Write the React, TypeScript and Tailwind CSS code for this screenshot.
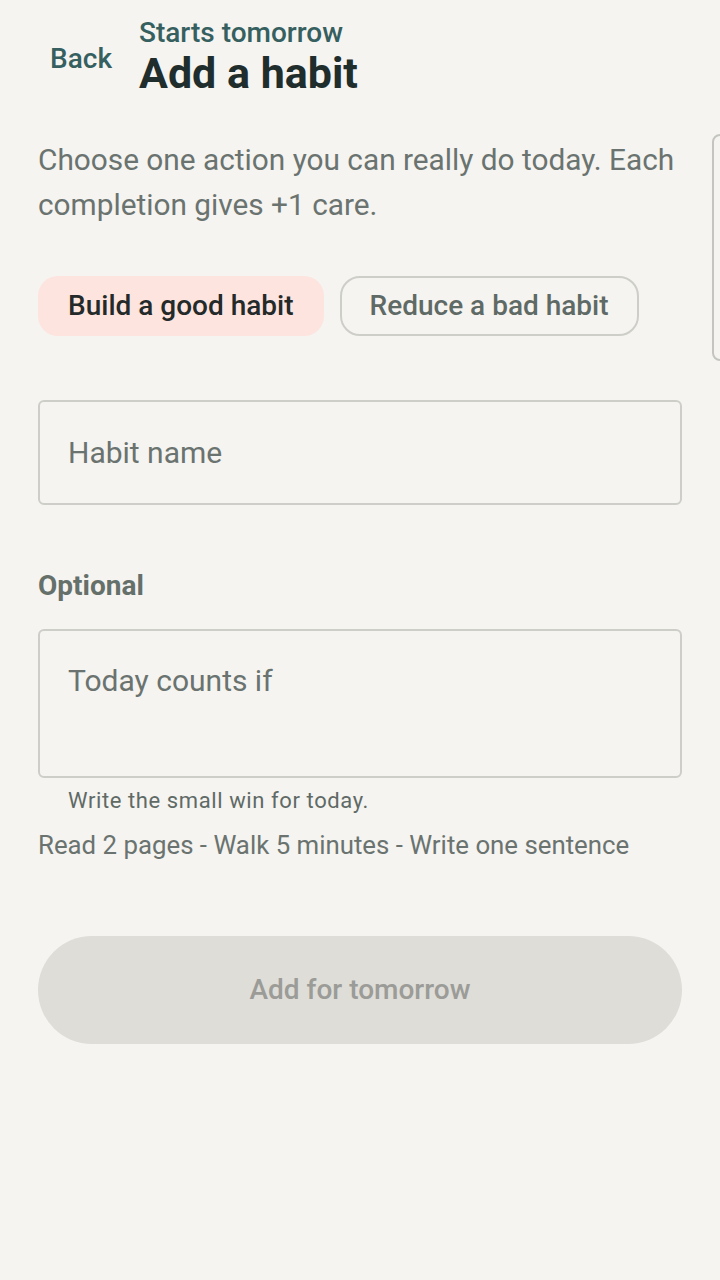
import React from "react";

export default function App() {
  return (
    <div
      className="relative min-h-[1280px] w-[720px] overflow-hidden bg-[#f5f4f0]"
      style={{ fontFamily: "Roboto, 'Noto Sans', sans-serif" }}
    >
      <div className="absolute left-[712px] top-[134px] h-[227px] w-[40px] rounded-[8px] border-2 border-[#c4c5bf]" />
      <div className="px-[38px]">
        <header className="flex items-center pt-[17px]">
          <button className="ml-[12px] pt-[4px] text-[28px] font-medium leading-[32px] text-[#35605f]">
            Back
          </button>
          <div className="ml-[27px] flex flex-col">
            <span className="text-[28px] font-medium leading-[32px] text-[#35605f]">
              Starts tomorrow
            </span>
            <h1 className="text-[43px] font-bold leading-[48px] text-[#1f2d2c]">
              Add a habit
            </h1>
          </div>
        </header>

        <p className="mt-[40px] text-[29.8px] leading-[45px] text-[#6a736f]">
          Choose one action you can really do today. Each completion gives +1
          care.
        </p>

        <div className="mt-[49px] flex gap-[16px]">
          <button className="h-[60px] rounded-[20px] bg-[#fde4de] px-[30px] text-[28px] font-medium text-[#242a29]">
            Build a good habit
          </button>
          <button className="h-[60px] rounded-[20px] border-2 border-[#cdcec8] px-[28px] text-[28px] font-medium text-[#5f6a66]">
            Reduce a bad habit
          </button>
        </div>

        <div className="mt-[64px] flex h-[105px] items-center rounded-[6px] border-2 border-[#cdcec8] px-[28px]">
          <span className="text-[30px] text-[#6a736f]">Habit name</span>
        </div>

        <div className="mt-[66px] text-[28px] font-bold leading-[30px] text-[#66706b]">
          Optional
        </div>

        <div className="mt-[28px] h-[149px] rounded-[6px] border-2 border-[#cdcec8] px-[28px] pt-[32px]">
          <span className="text-[30px] leading-[36px] text-[#6a736f]">
            Today counts if
          </span>
        </div>

        <div className="mt-[10px] pl-[30px] text-[22px] leading-[26px] tracking-[0.6px] text-[#5f6a66]">
          Write the small win for today.
        </div>
        <div className="mt-[16px] text-[25.8px] leading-[30px] text-[#6a736f]">
          Read 2 pages - Walk 5 minutes - Write one sentence
        </div>

        <button className="mt-[76px] flex h-[108px] w-full items-center justify-center rounded-full bg-[#deddd8] text-[28px] font-medium text-[#9b9b97]">
          Add for tomorrow
        </button>
      </div>
    </div>
  );
}
